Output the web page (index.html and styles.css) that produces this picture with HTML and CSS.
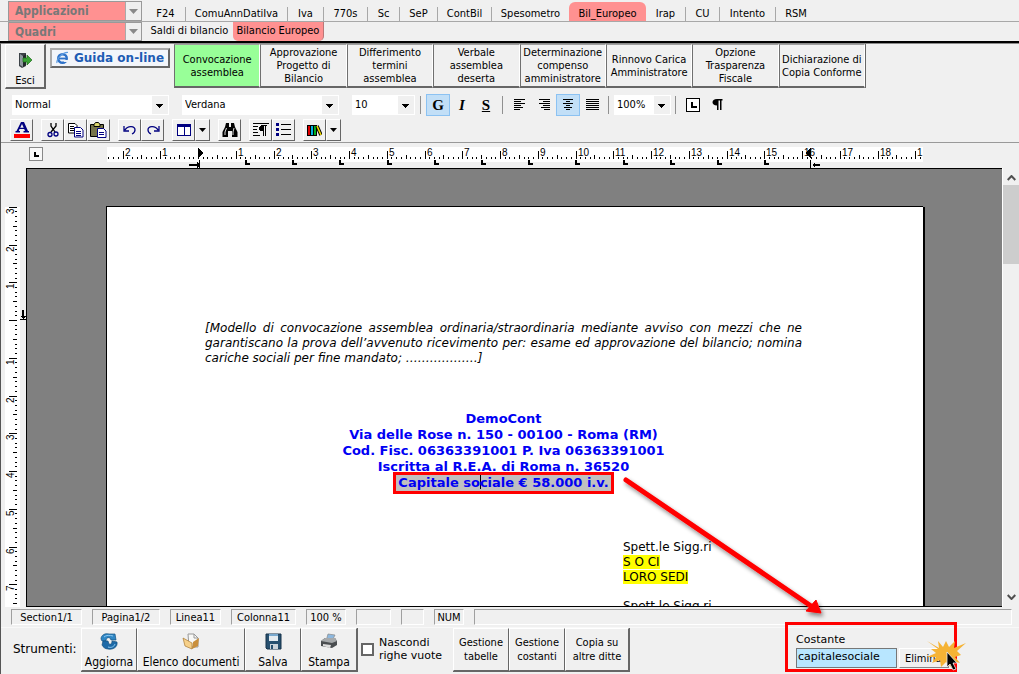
FILE: index.html
```html
<!DOCTYPE html>
<html lang="it">
<head>
<meta charset="utf-8">
<title>Bilancio Europeo</title>
<link rel="stylesheet" href="styles.css">
</head>
<body>
<div class="app">
  <header class="nav">
    <div class="nav-row nav-apps">
      <button class="nav-combo">Applicazioni <span class="nav-arrow"><svg width="9" height="5" viewBox="0 0 9 5"><path d="M0 0h9L4.500 5z" fill="#8a8a8a"/></svg></span></button>
      <nav class="tabs tabs-main">
        <a href="#">F24</a><a href="#">ComuAnnDatiIva</a><a href="#">Iva</a><a href="#">770s</a><a href="#">Sc</a><a href="#">SeP</a><a href="#">ContBil</a><a href="#" class="before-active">Spesometro</a><a href="#" class="tab-active">Bil_Europeo</a><a href="#">Irap</a><a href="#">CU</a><a href="#">Intento</a><a href="#" class="last">RSM</a>
      </nav>
    </div>
    <div class="nav-row">
      <button class="nav-combo">Quadri <span class="nav-arrow"><svg width="9" height="5" viewBox="0 0 9 5"><path d="M0 0h9L4.500 5z" fill="#8a8a8a"/></svg></span></button>
      <nav class="tabs tabs-sub">
        <a href="#">Saldi di bilancio</a><a href="#" class="sub-active">Bilancio Europeo</a>
      </nav>
    </div>
  </header>

  <main class="editor">
    <section class="actions">
      <button class="exit">
        <svg width="16" height="17" viewBox="0 0 16 17"><path d="M2 1h7v13l-4 2-3-2z" fill="#3c4248"/><path d="M3 2l3 2v11l-3-2z" fill="#8e979e"/><path d="M9 2v11l-3 2V4z" fill="#23272b"/><path d="M6 6h4V3l5 5-5 5v-3H6z" fill="#39a334" stroke="#1d6b1c" stroke-width=".7"/></svg>
        Esci
      </button>
      <button class="guide">
        <svg width="13" height="14" viewBox="0 0 13 14"><circle cx="6.500" cy="7.500" r="4.300" fill="none" stroke="#2f72c8" stroke-width="2.400"/><path d="M3 7.500h8" stroke="#2f72c8" stroke-width="1.800"/><path d="M8 9h4v2H8z" fill="#eef2f8"/><path d="M1 12C0 8 7 1 12 1.500" fill="none" stroke="#5c9be0" stroke-width="1.200"/></svg>
        Guida on-line
      </button>
      <div class="models">
        <button class="model-active">Convocazione assemblea</button>
        <button>Approvazione Progetto di Bilancio</button>
        <button>Differimento termini assemblea</button>
        <button>Verbale assemblea deserta</button>
        <button>Determinazione compenso amministratore</button>
        <button>Rinnovo Carica Amministratore</button>
        <button>Opzione Trasparenza Fiscale</button>
        <button>Dichiarazione di Copia Conforme</button>
      </div>
    </section>

    <section class="format">
      <select class="pick pick-wide" aria-label="Stile"><option>Normal</option></select>
      <select class="pick pick-wide" aria-label="Carattere"><option>Verdana</option></select>
      <select class="pick pick-size" aria-label="Dimensione"><option>10</option></select>
      <i class="sep"></i>
      <button class="flat on glyph">G</button>
      <button class="flat glyph slant">I</button>
      <button class="flat glyph under">S</button>
      <i class="sep"></i>
      <button class="flat" aria-label="Allinea a sinistra"><svg width="12" height="12" shape-rendering="crispEdges"><path d="M0 .5h11M0 2.500h7M0 4.500h11M0 6.500h7M0 8.500h9M0 10.500h6" stroke="#000"/></svg></button>
      <button class="flat" aria-label="Allinea a destra"><svg width="12" height="12" shape-rendering="crispEdges"><path d="M1 .5h11M5 2.500h7M1 4.500h11M5 6.500h7M3 8.500h9M6 10.500h6" stroke="#000"/></svg></button>
      <button class="flat on" aria-label="Centra"><svg width="12" height="12" shape-rendering="crispEdges"><path d="M1 .5h10M4 2.500h4M1 4.500h10M4 6.500h4M2 8.500h8M4 10.500h4" stroke="#000"/></svg></button>
      <button class="flat" aria-label="Giustifica"><svg width="13" height="12" shape-rendering="crispEdges"><path d="M0 .5h13M0 2.500h13M0 4.500h13M0 6.500h13M0 8.500h13M0 10.500h13" stroke="#000"/></svg></button>
      <i class="sep"></i>
      <select class="pick pick-zoom" aria-label="Zoom"><option>100%</option></select>
      <i class="sep"></i>
      <button class="flat" aria-label="Tabulazione"><svg width="14" height="14" shape-rendering="crispEdges"><path d="M.5 .5h13v13H.5z" fill="#fff" stroke="#000"/><path d="M5 4h2v4h4v2H5z"/></svg></button>
      <button class="flat" aria-label="Segni di paragrafo"><svg width="11" height="12"><path d="M10.500 0v1.500H9.500V11H8V1.500H6.500V11H5V6.500C2 6.500 .5 5 .5 3.200S2 0 5 0z"/></svg></button>
    </section>

    <section class="tools">
      <div class="group"><button class="tool" aria-label="Colore testo"><svg width="18" height="18" viewBox="0 0 18 18"><path d="M8 1h3l4 9h1v1.500h-5.500V10H12l-.8-2H6.500L5.800 10H7v1.500H2.500V10h1zM9 3L7.200 6.700h3.500z" fill="#000080"/><path d="M1 13h16v4H1z" fill="#f00"/></svg></button></div>
      <div class="group">
        <button class="tool" aria-label="Taglia"><svg width="16" height="16" viewBox="0 0 16 16" fill="none"><path d="M6 1v3l4 6M11 1v3L6 10" stroke="#000" stroke-width="1.300"/><circle cx="5" cy="12.500" r="2" stroke="#000080" stroke-width="1.300"/><circle cx="11" cy="12" r="2" stroke="#000080" stroke-width="1.300"/></svg></button>
        <button class="tool" aria-label="Copia"><svg width="16" height="15" viewBox="0 0 16 15" fill="#fff"><path d="M1 .5h6l2 2V10H.5V.5z" stroke="#000"/><path d="M2 3.500h4M2 5.500h4M2 7.500h4" stroke="#000"/><path d="M6.500 4.500h6l2.500 2.500v7H6.500z" stroke="#000080"/><path d="M8 8.500h5M8 10.500h5M8 12.500h5" stroke="#000080"/></svg></button>
        <button class="tool" aria-label="Incolla"><svg width="17" height="16" viewBox="0 0 17 16"><path d="M.5 2.500h13v12H.5z" fill="#76744a" stroke="#000"/><path d="M4 2.500L5.500.5h3L10 2.500v2H4z" fill="#ddd66c" stroke="#000"/><path d="M7.500 6.500h6l2.500 2.500v6.500H7.500z" fill="#fff" stroke="#000080"/><path d="M9 10.500h5M9 12.500h5" stroke="#000080"/></svg></button>
      </div>
      <div class="group">
        <button class="tool" aria-label="Annulla"><svg width="14" height="10" viewBox="0 0 14 10" fill="none" stroke="#000080" stroke-width="1.300"><path d="M2 5c3-5 10-4 10 0 0 2-1 3-3 4M1 1v5h5"/></svg></button>
        <button class="tool" aria-label="Ripeti"><svg width="14" height="10" viewBox="0 0 14 10" fill="none" stroke="#000080" stroke-width="1.300"><path d="M12 5C9 0 2 1 2 5c0 2 1 3 3 4M13 1v5H8"/></svg></button>
      </div>
      <div class="group">
        <button class="tool" aria-label="Tabella"><svg width="14" height="12" shape-rendering="crispEdges"><path d="M.5 .5h13v11H.5zM7.500 2v10" fill="#fff" stroke="#000080"/><path d="M0 0h14v3H0z" fill="#000080"/></svg></button>
        <button class="tool tool-drop" aria-label="Opzioni tabella"><svg width="7" height="4"><path d="M0 0h7L3.500 4z"/></svg></button>
      </div>
      <div class="group"><button class="tool" aria-label="Trova"><svg width="16" height="14" viewBox="0 0 16 14"><path d="M4 0h3v4h2V0h3l1 4 2.500 5v5H10V8H6v6H.5V9L3 4z"/><path d="M4.500 5L3 9v3M12 5l-1 4v3" stroke="#ddd" fill="none"/></svg></button></div>
      <div class="group">
        <button class="tool" aria-label="Paragrafo"><svg width="16" height="16" viewBox="0 0 16 16" shape-rendering="crispEdges"><path d="M0 1.500h16M0 4.500h5M0 7.500h4M0 10.500h5M0 13.500h7" stroke="#000"/><path d="M14 3v1h-1v10h-1V4h-1v10h-1V9C6 9 5 7 6 5q1-2 4-2z"/></svg></button>
        <button class="tool" aria-label="Elenco puntato"><svg width="15" height="14" shape-rendering="crispEdges"><path d="M0 0h3v3H0zM0 5h3v3H0zM0 10h3v3H0z" fill="#000080"/><path d="M5 1.500h10M5 6.500h10M5 11.500h10" stroke="#000"/></svg></button>
      </div>
      <div class="group">
        <button class="tool" aria-label="Libreria"><svg width="15" height="11" viewBox="0 0 15 11"><path d="M0 0h10v11H0z"/><path d="M1 1h2v9H1z" fill="#e00000"/><path d="M4 1h2v9H4z" fill="#00b0e0"/><path d="M7 1h2v9H7z" fill="#00b020"/><path d="M10 1l4 9" stroke="#000" stroke-width="3.500"/><path d="M10 1l4 9" stroke="#f0d800" stroke-width="1.600"/></svg></button>
        <button class="tool tool-drop" aria-label="Opzioni libreria"><svg width="7" height="4"><path d="M0 0h7L3.500 4z"/></svg></button>
      </div>
    </section>

    <section class="ruler-row">
      <button class="tab-kind" aria-label="Tipo tabulazione"><svg width="5" height="5" shape-rendering="crispEdges"><path d="M0 0h2v3h3v2H0z"/></svg></button>
      <svg class="ruler-h" id="ruler-h" width="818" height="21" shape-rendering="crispEdges"></svg>
    </section>

    <section class="workspace">
      <div class="side-ruler"><svg id="ruler-v" width="26" height="400" shape-rendering="crispEdges"></svg></div>
      <div class="canvas">
        <article class="sheet">
          <p class="note"><span>[Modello di convocazione assemblea ordinaria/straordinaria mediante avviso con mezzi che ne</span><span>garantiscano la prova dell’avvenuto ricevimento per: esame ed approvazione del bilancio; nomina</span><span>cariche sociali per fine mandato; ………………]</span></p>
          <div class="company">
            <p>DemoCont</p>
            <p>Via delle Rose n. 150 - 00100 - Roma (RM)</p>
            <p>Cod. Fisc. 06363391001 P. Iva 06363391001</p>
            <p>Iscritta al R.E.A. di Roma n. 36520</p>
            <p><span class="picked">Capitale so<i class="caret"></i>ciale € 58.000 i.v.</span></p>
          </div>
          <div class="recipients">
            <p>Spett.le Sigg.ri</p>
            <p><mark>S O CI</mark></p>
            <p><mark>LORO SEDI</mark></p>
            <p class="next">Spett.le Sigg.ri</p>
          </div>
        </article>
      </div>
      <div class="scroll">
        <svg width="9" height="6" viewBox="0 0 9 6"><path d="M.7 5l3.800-4 3.800 4" fill="none" stroke="#505050" stroke-width="2"/></svg>
        <div class="thumb"></div>
        <svg width="9" height="6" viewBox="0 0 9 6"><path d="M.7 1l3.800 4 3.800-4" fill="none" stroke="#505050" stroke-width="2"/></svg>
      </div>
    </section>

    <section class="status">
      <span>Section1/1</span><span>Pagina1/2</span><span>Linea11</span><span>Colonna11</span><span>100 %</span><span></span><span></span><span>NUM</span><span></span>
    </section>

    <footer class="bottom">
      <span class="bottom-title">Strumenti:</span>
      <div class="bottom-group icons">
        <button><svg width="18" height="17" viewBox="0 0 18 17"><path d="M1 6C1 2 5 0 9 1h6l1 6h-5l-1-2C8 4 6 5 6 8H2z" fill="#2f86c4" stroke="#14507e" stroke-width=".7"/><path d="M17 9c1 5-4 8-9 7-3 0-5-2-6-4l1-4h5l1 3c2 1 3-1 3-3z" fill="#1d6aa8" stroke="#14507e" stroke-width=".7"/><path d="M4 4c2-2 6-2 9-1M8 14c3 1 6 0 7-3" stroke="#8cc8f0" fill="none"/></svg>Aggiorna</button>
        <button><svg width="18" height="17" viewBox="0 0 18 17"><path d="M6 1h6l4 4v9H7z" fill="#f8f8f6" stroke="#999"/><path d="M12 1v4h4" fill="none" stroke="#999"/><path d="M11 9l6-4-1 8-6 3z" fill="#c98f3c"/><path d="M1 5l9 5v6L3 13z" fill="#f6d089" stroke="#a87830" stroke-width=".7"/></svg>Elenco documenti</button>
        <button><svg width="17" height="17" viewBox="0 0 17 17"><path d="M1 1h15v15H2l-1-1z" fill="#27506f" stroke="#17324a"/><path d="M4 1h9v7H4z" fill="#e4ebf0"/><path d="M4 1h9v2H4z" fill="#78a9cf"/><path d="M5 11h8v5H5z" fill="#cbd3d9"/><path d="M6 12h2v4H6z" fill="#27506f"/></svg>Salva</button>
        <button><svg width="18" height="17" viewBox="0 0 18 17"><path d="M8 1l7 1-3 6H6z" fill="#8db8df" stroke="#888" stroke-width=".7"/><path d="M1 8l4-3h10l2 3v4l-5 3-11-2z" fill="#4a4d50"/><path d="M1 8l4-3h10l2 3-5 2z" fill="#a6a9ab"/><path d="M3 11l8 1-1 3-7-2z" fill="#ddd"/></svg>Stampa</button>
      </div>
      <label class="hide-rows"><input type="checkbox"><span>Nascondi righe vuote</span></label>
      <div class="bottom-group texts">
        <button>Gestione tabelle</button><button>Gestione costanti</button><button>Copia su altre ditte</button>
      </div>
      <div class="constant">
        <label for="const">Costante</label>
        <div class="constant-row"><input id="const" type="text" value="capitalesociale"><button>Elimina</button></div>
        <svg class="burst" width="44" height="32" viewBox="0 0 44 32"><path d="M5 1l12 7-1-7 5 6 3-6 3 6 6-6-1 7 12-5-9 8 4 4-6 2 5 6-8-2v7l-6-6-5 5-1-7-8 3 4-6-9 0 9-4-5-4h7z" fill="#f5b335"/><path d="M25 12v15l3-3 3 6 3-1-3-6h4z" fill="#000" stroke="#eee" stroke-width=".8"/></svg>
      </div>
    </footer>
  </main>

  <svg class="pointer" width="210" height="148" viewBox="0 0 210 148"><defs><filter id="soft" x="-10%" y="-10%" width="130%" height="130%"><feDropShadow dx="2" dy="3" stdDeviation="2" flood-color="#000" flood-opacity=".45"/></filter></defs><g filter="url(#soft)"><path d="M4 4l185 126" stroke="#f00" stroke-width="5" stroke-linecap="round"/><path d="M199 137l-15-2 10-11z" fill="#f00" stroke="#f00"/></g></svg>
</div>
<script src="rulers.js"></script>
</body>
</html>
```
FILE: styles.css
```css
* { box-sizing: border-box; }
body { margin: 0; background: #f0f0f0; color: #000; font: 11px/13px "DejaVu Sans Condensed", "DejaVu Sans", sans-serif; }
button, input, select { margin: 0; font: inherit; color: inherit; border-radius: 0; }
button { padding: 0; cursor: default; }
a { color: inherit; text-decoration: none; }
p { margin: 0; }
svg { display: block; flex: none; }

.app { position: relative; display: flex; flex-direction: column; height: 100vh; overflow: hidden; }

.nav { border-bottom: 2px solid #000; padding-top: 1px; }
.nav-row { display: flex; height: 19px; padding-left: 8px; }
.nav-apps { height: 21px; border-bottom: 1px solid #a8a8a8; }
.nav-combo { display: flex; align-items: center; justify-content: space-between; width: 134px; padding: 0 0 0 6px; border: 1px solid #999; background: #ff9191; color: #787878; font: bold 12px/16px "DejaVu Sans Condensed", "DejaVu Sans", sans-serif; }
.nav-arrow { display: flex; align-items: center; justify-content: center; width: 16px; align-self: stretch; border-left: 1px solid #aaa; background: #efefef; }
.tabs { display: grid; margin-left: 4px; text-align: center; white-space: nowrap; }
.tabs-main { grid-template-columns: 40px 102px 36px 44px 32px 38px 54px 77px 77px 40px 34px 56px 40px; }
.tabs-main a { margin-top: 6px; line-height: 13px; border-right: 1px solid #a8a8a8; }
.tabs-main .last, .tabs-main .before-active { border-right: 0; }
.tabs-main .tab-active { margin-top: 1px; padding-top: 5px; background: #ff9191; border: 0; border-radius: 6px 6px 0 0; }
.tabs-sub { grid-template-columns: 87px 91px; }
.tabs-sub a { line-height: 18px; }
.tabs-sub .sub-active { background: #ff9191; border-right: 1px solid #b77; border-radius: 0 0 5px 5px; }

.editor { flex: 1; min-height: 0; display: flex; flex-direction: column; border-left: 1px solid #555; border-top: 1px solid #8a8a8a; }
.actions { display: flex; align-items: flex-start; height: 47px; padding-left: 4px; }
.exit, .bottom-group button, .tool { border: 1px solid; border-color: #fff #666 #666 #fff; background: #f0f0f0; }
.exit { display: flex; flex-direction: column; align-items: center; gap: 5px; width: 41px; height: 45px; padding-top: 7px; border-width: 1px 2px 2px 1px; }
.guide { display: flex; align-items: center; justify-content: center; gap: 5px; width: 120px; height: 20px; margin: 4px 4px 0 4px; border: 2px solid; border-color: #aaa #666 #666 #aaa; background: #f2f5fa; color: #1d5cb4; font: bold 12px/14px "DejaVu Sans", sans-serif; white-space: nowrap; }
.models { display: grid; grid-template-columns: repeat(8, 1fr); width: 692px; height: 44px; background: #f0f0f0; border-right: 1px solid #666; }
.models button { border: 1px solid; border-color: #a0a0a0 #fff #666 #707070; border-bottom-width: 2px; background: #f0f0f0; padding: 0 1px; }
.models .model-active { background: #98ff98; }

.format { display: flex; align-items: center; height: 28px; padding-left: 11px; }
.pick { height: 20px; border: 0; padding: 0 20px 0 3px; appearance: none; font: 11px/20px "DejaVu Sans Condensed", sans-serif; background-color: #fff; background-image: linear-gradient(#000, #000), linear-gradient(#000, #000), linear-gradient(#000, #000), linear-gradient(#000, #000), linear-gradient(#f0f0f0, #f0f0f0); background-repeat: no-repeat; background-size: 7px 1px, 5px 1px, 3px 1px, 1px 1px, 16px 18px; background-position: right 6px top 9px, right 7px top 10px, right 8px top 11px, right 9px top 12px, right 1px top 1px; }
.pick-wide { width: 157px; margin-right: 13px; }
.pick-size { width: 63px; margin-right: 1px; }
.pick-zoom { width: 57px; }
.sep { width: 1px; height: 18px; margin: 0 5px 0 4px; background: #909090; }
.flat { display: flex; align-items: center; justify-content: center; width: 24px; height: 22px; border: 1px solid transparent; background: transparent; }
.flat.on { background: #c2dff7; border-color: #8cc2f2; }
.glyph { font: bold 15px/18px "Liberation Serif", serif; }
.slant { font-style: italic; }
.under { text-decoration: underline; }

.tools { display: flex; gap: 8px; height: 24px; padding-left: 9px; border-bottom: 1px solid #999; }
.group { display: flex; }
.tool { display: flex; align-items: center; justify-content: center; width: 23px; height: 22px; }
.tool-drop { width: 15px; }

.ruler-row { display: flex; align-items: flex-start; height: 25px; padding: 4px 0 0 28px; }
.tab-kind { display: flex; align-items: center; justify-content: center; width: 14px; height: 14px; border: 1px solid #888; background: #f8f8f8; }
.ruler-h { margin-left: 64px; }
.ruler-label { font: 10px "Liberation Sans", Arial, sans-serif; }

.workspace { flex: 1; min-height: 0; display: grid; grid-template-columns: 25px 1fr 17px; overflow: hidden; }
.side-ruler { padding-top: 39px; overflow: hidden; }
.canvas { min-height: 0; overflow: hidden; padding: 37px 0 0 79px; background: #808080; border: 1px solid #000; border-right: 0; }
.sheet { width: 817px; min-height: 500px; padding: 114px 121px 0 98px; border: 1px solid #000; border-right: 0; background: #fff; box-shadow: 2px 1px 0 #000; font: 12px/15px "DejaVu Sans", Verdana, sans-serif; }
.note { font-style: italic; text-align: justify; white-space: nowrap; }
.note span { display: block; text-align-last: justify; }
.note span:last-child { text-align-last: left; }
.company { margin-top: 45px; text-align: center; font-weight: bold; font-size: 13px; line-height: 16px; color: #0000f4; }
.picked { display: inline-block; background: #c0c0c0; outline: 3px solid #f00; padding: 0 2px; }
.caret { display: inline-block; width: 1px; height: 14px; margin-right: -1px; vertical-align: -2px; background: #000; }
.recipients { margin: 49px 0 0 418px; white-space: nowrap; }
.recipients mark { background: #ff0; }
.recipients .next { margin-top: 14px; }

.scroll { display: flex; flex-direction: column; align-items: center; padding: 7px 0; background: #f0f0f0; border-left: 1px solid #fff; }
.thumb { align-self: stretch; height: 79px; margin: 4px 0 auto; background: #cdcdcd; }

.status { display: grid; grid-template-columns: 71px 68px 51px 65px 40px 35px 23px 30px 1fr; gap: 10px; padding: 2px 7px 2px 10px; text-align: center; white-space: nowrap; }
.status span { height: 16px; line-height: 15px; border: 1px solid; border-color: #a0a0a0 #fff #fff #a0a0a0; }

.bottom { display: flex; align-items: flex-start; height: 47px; border-top: 1px solid #f8f8f8; }
.bottom-title { width: 80px; padding: 13px 0 0 12px; font: 13px/16px "DejaVu Sans", sans-serif; font-size: 12px; white-space: nowrap; }
.bottom-group { display: grid; height: 44px; border: 1px solid #666; border-width: 0 1px 1px 0; font: 12px/14px "DejaVu Sans Condensed", sans-serif; }
.bottom-group button { display: flex; align-items: center; justify-content: center; white-space: nowrap; }
.icons { grid-template-columns: 56px 108px 56px 56px; }
.icons button { flex-direction: column; justify-content: space-between; padding: 4px 0 1px; }
.texts { grid-template-columns: 56px 56px 64px; font-size: 11px; }
.texts button { white-space: normal; padding: 0 2px; }
.hide-rows { display: flex; align-items: center; gap: 5px; width: 95px; padding: 8px 0 0 3px; font: 11px/13px "DejaVu Sans", sans-serif; }
.hide-rows input { appearance: none; flex: none; width: 13px; height: 13px; margin: 0; border: 2px solid #666; background: #fff; }
.constant { position: relative; width: 172px; height: 50px; margin: -6px 62px 0 auto; padding: 8px 0 0 8px; border: 3px solid #f00; font: 11px/14px "DejaVu Sans", sans-serif; }
.constant-row { display: flex; gap: 2px; margin-top: 1px; }
.constant-row input { width: 101px; height: 20px; padding: 0 1px 3px; border: 1px solid #777; background: #b8e6ff; }
.constant-row button { width: 50px; height: 20px; border: 1px solid; border-color: #fff #888 #888 #fff; background: #f0f0f0; font-family: "DejaVu Sans Condensed", sans-serif; text-align: left; padding: 2px 0 0 5px; }
.burst { position: absolute; right: -12px; bottom: -3px; }

.pointer { position: absolute; left: 622px; top: 476px; pointer-events: none; }
```
FILE: rulers.js
```js
const NS = "http://www.w3.org/2000/svg";
const CM = 37.75;

function add(parent, tag, attrs, text) {
  const el = document.createElementNS(NS, tag);
  for (const key in attrs) el.setAttribute(key, attrs[key]);
  if (text !== undefined) el.textContent = text;
  parent.append(el);
}

// Eighths of a centimetre: tall at the centimetre, medium at the half.
function tickLength(i) {
  if (i % 8 === 0) return 8;
  return i % 4 === 0 ? 4 : 2;
}

const h = document.getElementById("ruler-h");
add(h, "rect", { x: 0, y: 0, width: 816, height: 15, fill: "#fff" });
const zeroX = 91;
for (let i = -19; i <= 153; i++) {
  const x = Math.round(zeroX + i * CM / 8);
  const len = tickLength(i);
  add(h, "rect", { x, y: 12 - len, width: 1, height: len });
  if (i % 8 === 0 && i !== 0) {
    const n = Math.abs(i / 8);
    add(h, "text", { x: x + 2, y: 9, class: "ruler-label" }, n === 19 ? "1" : n);
  }
}
for (let n = 0; n < 12; n++) {
  const x = Math.round(138 + n * 47.2);
  add(h, "path", { d: `M${x} 13h2v3h3v2h-5z` });
}
add(h, "path", { d: "M91 1h1l4 5-4 5h-1zM82 17h8v-2l3 3-3 3v-2h-8zM92 13h1v8h-1z" });
add(h, "path", { d: "M704 1h-1l-5 5 5 5h1zM713 17h-5v-2l-3 3 3 3v-2h5zM703 13h1v8h-1z" });

const v = document.getElementById("ruler-v");
add(v, "rect", { x: 4, y: 0, width: 15, height: 400, fill: "#fff" });
const zeroY = 113;
for (let i = -24; i <= 60; i++) {
  const y = Math.round(zeroY + i * CM / 8);
  const len = tickLength(i);
  add(v, "rect", { x: 16 - len, y, width: len, height: 1 });
  if (i % 8 === 0 && i !== 0) {
    add(v, "text", { transform: `translate(13 ${y + 7}) rotate(-90)`, class: "ruler-label" }, Math.abs(i / 8));
  }
}
add(v, "path", { d: "M21 103h2v6h2l-3 3-3-3h2zM19 112h6v1h-6z" });
```
